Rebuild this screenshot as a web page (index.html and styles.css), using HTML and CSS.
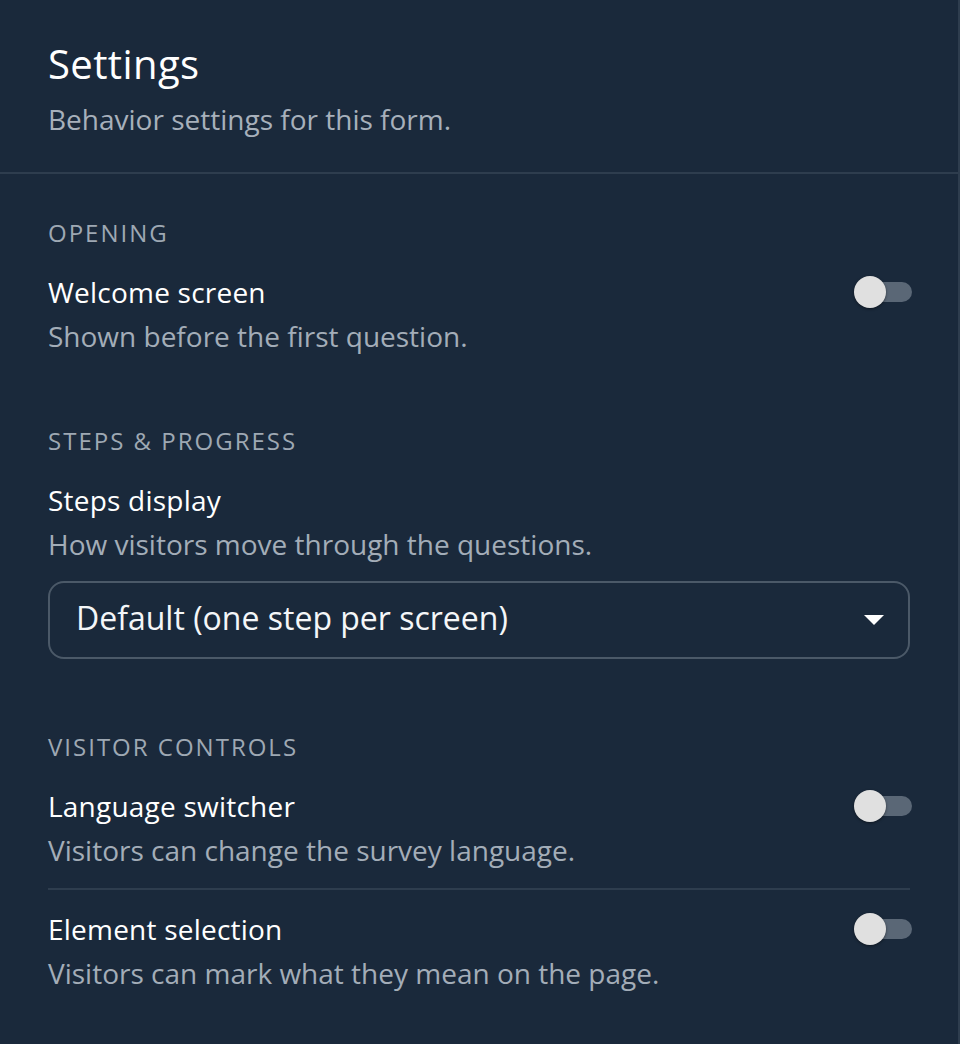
FILE: index.html
```html
<!DOCTYPE html>
<html lang="en">
<head>
<meta charset="utf-8">
<title>Settings</title>
<link rel="stylesheet" href="styles.css">
</head>
<body>
<div class="panel">
  <header class="panel-header">
    <h1 class="panel-title">Settings</h1>
    <p class="panel-subtitle">Behavior settings for this form.</p>
  </header>
  <main class="panel-body">
    <section class="group">
      <h2 class="group-label">OPENING</h2>
      <div class="item">
        <div class="item-text">
          <div class="item-title">Welcome screen</div>
          <div class="item-desc">Shown before the first question.</div>
        </div>
        <span class="switch"><span class="switch-track"></span><span class="switch-thumb"></span></span>
      </div>
    </section>

    <section class="group">
      <h2 class="group-label">STEPS &amp; PROGRESS</h2>
      <div class="item item-stack">
        <div class="item-text">
          <div class="item-title">Steps display</div>
          <div class="item-desc">How visitors move through the questions.</div>
        </div>
        <div class="select">
          <span class="select-value">Default (one step per screen)</span>
          <svg class="select-caret" width="20" height="10" viewBox="0 0 20 10"><polygon points="0,0 20,0 10,10" fill="#ffffff"/></svg>
        </div>
      </div>
    </section>

    <section class="group">
      <h2 class="group-label">VISITOR CONTROLS</h2>
      <div class="item">
        <div class="item-text">
          <div class="item-title">Language switcher</div>
          <div class="item-desc">Visitors can change the survey language.</div>
        </div>
        <span class="switch"><span class="switch-track"></span><span class="switch-thumb"></span></span>
      </div>
      <div class="item">
        <div class="item-text">
          <div class="item-title">Element selection</div>
          <div class="item-desc">Visitors can mark what they mean on the page.</div>
        </div>
        <span class="switch"><span class="switch-track"></span><span class="switch-thumb"></span></span>
      </div>
    </section>
  </main>
</div>
</body>
</html>
```

FILE: styles.css
```css
html, body {
  margin: 0;
  padding: 0;
  background: #1a293b;
}

body {
  font-family: "Open Sans", "Noto Sans", sans-serif;
  color: #ffffff;
}

.panel {
  width: 960px;
  min-height: 1044px;
  box-sizing: border-box;
  border-right: 2px solid #2e3d4e;
  background: #1a293b;
}

.panel-header {
  padding: 40px 48px 33px 48px;
  border-bottom: 2px solid #2e3d4e;
}

.panel-title {
  margin: 0;
  font-size: 40px;
  line-height: 48px;
  font-weight: 500;
  letter-spacing: 0.4px;
  color: #ffffff;
}

.panel-subtitle {
  margin: 11px 0 0 0;
  font-size: 28px;
  line-height: 40px;
  color: #a7b0bb;
}

.panel-body {
  padding: 43px 48px 0 48px;
  display: flex;
  flex-direction: column;
  gap: 67px;
}

.group-label {
  margin: 0 0 21px 0;
  font-size: 24px;
  line-height: 32px;
  font-weight: 400;
  letter-spacing: 2px;
  color: #9ea8b3;
}

.item {
  display: flex;
  align-items: flex-start;
  justify-content: space-between;
}

.item + .item {
  margin-top: 16px;
  padding-top: 17px;
  border-top: 2px solid #2e3d4e;
}

.item-stack {
  flex-direction: column;
  align-items: stretch;
}

.item-title {
  font-size: 28px;
  line-height: 44px;
  font-weight: 500;
  letter-spacing: 0.22px;
  color: #ffffff;
}

.item-desc {
  font-size: 28px;
  line-height: 44px;
  color: #a3adb8;
}

.switch {
  position: relative;
  width: 58px;
  height: 44px;
  margin-right: -2px;
  flex-shrink: 0;
}

.switch-track {
  position: absolute;
  left: 2px;
  right: 0;
  top: 12px;
  height: 20px;
  border-radius: 10px;
  background: #5a6776;
}

.switch-thumb {
  position: absolute;
  left: 0;
  top: 6px;
  width: 32px;
  height: 32px;
  border-radius: 50%;
  background: #e0e0e0;
  box-shadow: 0 1px 3px rgba(0, 0, 0, 0.45);
}

.select {
  margin-top: 15px;
  margin-bottom: 5px;
  height: 78px;
  box-sizing: border-box;
  border: 2px solid #4b5968;
  border-radius: 16px;
  padding: 0 24px 4px 26px;
  display: flex;
  align-items: center;
  justify-content: space-between;
}

.select-value {
  font-size: 32px;
  line-height: 44px;
  color: #f4f6f8;
}

.select-caret {
  display: block;
  margin-top: 4px;
}
```
